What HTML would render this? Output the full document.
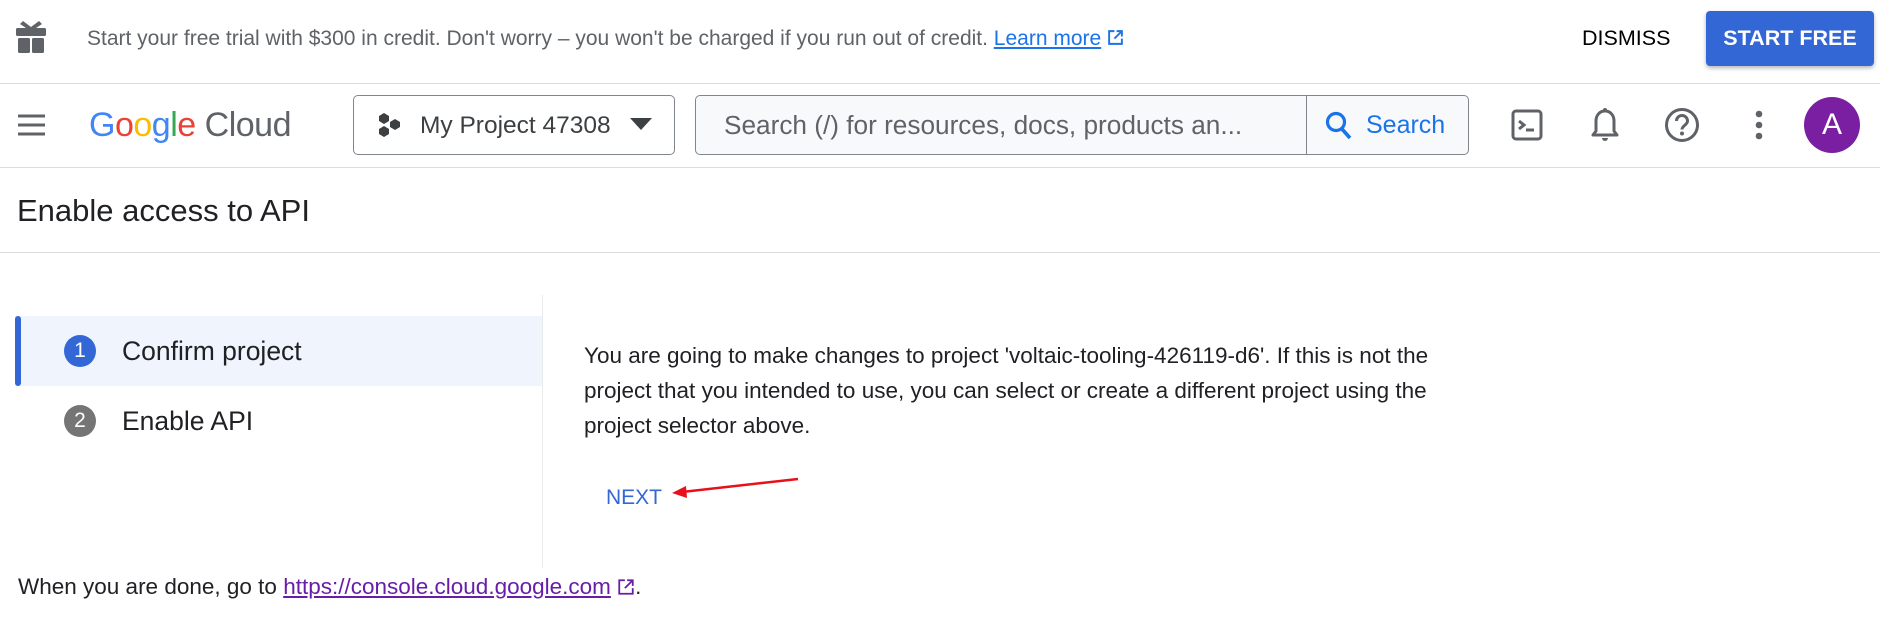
<!DOCTYPE html>
<html><head><meta charset="utf-8"><style>
*{margin:0;padding:0;box-sizing:border-box}
body{width:1880px;height:640px;overflow:hidden;background:#fff;font-family:"Liberation Sans",Arial,sans-serif;color:#202124;position:relative}
.a{position:absolute;white-space:nowrap}
.line{position:absolute;left:0;width:1880px;height:1px;background:#dadce0}
</style></head><body>
<!-- banner -->
<svg class="a" style="left:14px;top:19px" width="34" height="36" viewBox="0 0 34 36"><path d="M9 2 l8 6 l8-6 l3 3 l-6 4 h-10 l-6-4z" fill="#5f6368"/><rect x="2" y="9" width="30" height="8" rx="1.5" fill="#5f6368"/><rect x="4" y="19" width="12" height="15" rx="1.5" fill="#5f6368"/><rect x="18" y="19" width="12" height="15" rx="1.5" fill="#5f6368"/></svg>
<div class="a" style="left:87px;top:27px;font-size:21px;color:#5f6368">Start your free trial with $300 in credit. Don't worry – you won't be charged if you run out of credit. <span style="color:#1a73e8;text-decoration:underline">Learn more</span> <svg width="17" height="17" viewBox="0 0 16 16" style="vertical-align:-1px"><path d="M7 2H2v12h12V9M9 2h5v5M14 2L7 9" fill="none" stroke="#1a73e8" stroke-width="1.8"/></svg></div>
<div class="a" style="left:1582px;top:26px;font-size:21.5px;font-weight:500;color:#000">DISMISS</div>
<div class="a" style="left:1706px;top:11px;width:168px;height:55px;background:#3367d6;border-radius:4px;box-shadow:0 2px 4px rgba(0,0,0,.3);color:#fff;font-size:21.5px;font-weight:bold;text-align:center;line-height:55px">START FREE</div>
<div class="line" style="top:83px"></div>
<!-- header -->
<svg class="a" style="left:17px;top:113px" width="30" height="24" viewBox="0 0 30 24"><path d="M1 3h27M1 12h27M1 21h27" stroke="#5f6368" stroke-width="3"/></svg>
<div class="a" style="left:89px;top:106px;font-size:34px;letter-spacing:-0.5px"><span style="color:#4285f4">G</span><span style="color:#ea4335">o</span><span style="color:#fbbc04">o</span><span style="color:#4285f4">g</span><span style="color:#34a853">l</span><span style="color:#ea4335">e</span> <span style="color:#5f6368">Cloud</span></div>
<div class="a" style="left:353px;top:95px;width:322px;height:60px;border:1px solid #80868b;border-radius:5px"></div>
<svg class="a" style="left:378px;top:111px" width="24" height="28" viewBox="0 0 24 28"><polygon points="6,2 11,5 11,10 6,13 1,10 1,5" fill="#3c4043"/><polygon points="17,8 22,11 22,16 17,19 12,16 12,11" fill="#3c4043"/><polygon points="6,15 11,18 11,23 6,26 1,23 1,18" fill="#3c4043"/></svg>
<div class="a" style="left:420px;top:112px;font-size:24.5px;color:#3c4043">My Project 47308</div>
<svg class="a" style="left:630px;top:118px" width="22" height="12"><path d="M0 0h22L11 12z" fill="#3c4043"/></svg>
<div class="a" style="left:695px;top:95px;width:774px;height:60px;border:1px solid #80868b;border-radius:5px;background:#f8f9fa"></div>
<div class="a" style="left:1306px;top:96px;width:1px;height:58px;background:#80868b"></div>
<div class="a" style="left:724px;top:110px;font-size:26.2px;color:#5f6368">Search (/) for resources, docs, products an...</div>
<svg class="a" style="left:1325px;top:111px" width="28" height="30" viewBox="0 0 28 30"><circle cx="11" cy="11" r="8.5" fill="none" stroke="#1a73e8" stroke-width="3.2"/><path d="M17 18l8 9" stroke="#1a73e8" stroke-width="3.6"/></svg>
<div class="a" style="left:1366px;top:111px;font-size:25px;color:#1a73e8;font-weight:500">Search</div>
<svg class="a" style="left:1511px;top:109px" width="32" height="32" viewBox="0 0 32 32"><rect x="2" y="2" width="28" height="28" rx="3" fill="none" stroke="#5f6368" stroke-width="3"/><path d="M8 12l5 4-5 4" fill="none" stroke="#5f6368" stroke-width="3"/><path d="M15 21h8" stroke="#5f6368" stroke-width="3"/></svg>
<svg class="a" style="left:1590px;top:107px" width="30" height="36" viewBox="0 0 30 36"><path d="M15 4c-6 0-9 5-9 10v10l-3 4h24l-3-4V14c0-5-3-10-9-10z" fill="none" stroke="#5f6368" stroke-width="3" stroke-linejoin="round"/><circle cx="15" cy="3" r="2" fill="#5f6368"/><path d="M12 31a3 3 0 0 0 6 0z" fill="#5f6368"/></svg>
<svg class="a" style="left:1664px;top:107px" width="36" height="36" viewBox="0 0 36 36"><circle cx="18" cy="18" r="15.5" fill="none" stroke="#5f6368" stroke-width="3"/><path d="M12.5 14a5.5 5.5 0 0 1 11 0c0 4-5.5 4.5-5.5 8.5" fill="none" stroke="#5f6368" stroke-width="3"/><circle cx="18" cy="26.5" r="2" fill="#5f6368"/></svg>
<svg class="a" style="left:1753px;top:110px" width="12" height="30"><circle cx="6" cy="4" r="3.3" fill="#5f6368"/><circle cx="6" cy="15" r="3.3" fill="#5f6368"/><circle cx="6" cy="26" r="3.3" fill="#5f6368"/></svg>
<div class="a" style="left:1804px;top:97px;width:56px;height:56px;border-radius:50%;background:#7b1fa2;color:#fff;font-size:30px;text-align:center;line-height:56px">A</div>
<div class="line" style="top:167px"></div>
<!-- title -->
<div class="a" style="left:17px;top:193px;font-size:31px;color:#202124">Enable access to API</div>
<div class="line" style="top:252px"></div>
<!-- stepper -->
<div class="a" style="left:542px;top:295px;width:1px;height:273px;background:#e8eaed"></div>
<div class="a" style="left:15px;top:316px;width:527px;height:70px;background:#eff4fd"></div>
<div class="a" style="left:15px;top:316px;width:6px;height:70px;background:#3367d6;border-radius:3px"></div>
<div class="a" style="left:64px;top:335px;width:32px;height:32px;border-radius:50%;background:#3367d6;color:#fff;font-size:21px;text-align:center;line-height:32px">1</div>
<div class="a" style="left:122px;top:336px;font-size:26.5px">Confirm project</div>
<div class="a" style="left:64px;top:405px;width:32px;height:32px;border-radius:50%;background:#757575;color:#fff;font-size:21px;text-align:center;line-height:32px">2</div>
<div class="a" style="left:122px;top:406px;font-size:26.5px">Enable API</div>
<div class="a" style="left:584px;top:338px;font-size:22.5px;line-height:35px;white-space:normal;width:1000px">You are going to make changes to project 'voltaic-tooling-426119-d6'. If this is not the<br>project that you intended to use, you can select or create a different project using the<br>project selector above.</div>
<div class="a" style="left:606px;top:486px;font-size:21px;color:#3367d6;font-weight:500">NEXT</div>
<svg class="a" style="left:668px;top:474px" width="135" height="26"><path d="M130 5L14 18" stroke="#e8101b" stroke-width="2.5"/><path d="M4 19l14-7 1 12z" fill="#e8101b"/></svg>
<div class="a" style="left:18px;top:574px;font-size:22.5px">When you are done, go to <span style="color:#681da8;text-decoration:underline">https://console.cloud.google.com</span> <svg width="18" height="18" viewBox="0 0 16 16" style="vertical-align:-2px"><path d="M7 2H2v12h12V9M9 2h5v5M14 2L7 9" fill="none" stroke="#681da8" stroke-width="1.6"/></svg>.</div>
</body></html>
